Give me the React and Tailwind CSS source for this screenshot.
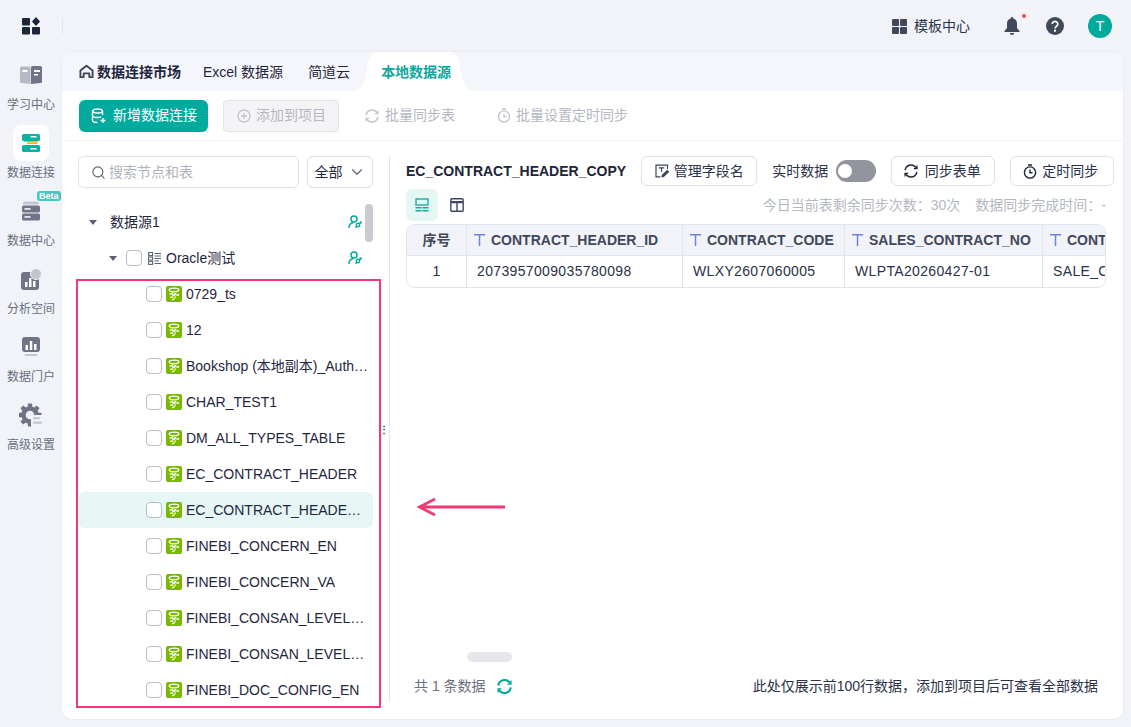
import React from "react";
import { Search, ChevronDown } from "lucide-react";

const FONT = { fontFamily: '"Liberation Sans", "Noto Sans CJK SC", sans-serif' };

const LogoIcon = () => (
  <svg width="18" height="18" viewBox="0 0 18 18" fill="#1d2539">
    <rect x="0" y="1" width="8" height="7.5" rx="1" />
    <rect x="0" y="10" width="8" height="7.5" rx="1" />
    <rect x="10" y="10" width="8" height="7.5" rx="1" />
    <path d="M14 0l4 4.500-4 4.500-4-4.500z" />
  </svg>
);

const BookIcon = () => (
  <svg width="24" height="20" viewBox="0 0 24 20">
    <path d="M2.500 1.500h7.500a1.500 1.500 0 0 1 1.500 1.500v16L2.500 18a1.500 1.500 0 0 1-1.500-1.500V3a1.500 1.500 0 0 1 1.500-1.500z" fill="#b5b9c6" />
    <path d="M21.500 1h-8A1.500 1.500 0 0 0 12 2.500V19l9.500-1a1.500 1.500 0 0 0 1.500-1.500v-14A1.500 1.500 0 0 0 21.500 1z" fill="#6f7586" />
    <rect x="3.500" y="5" width="5" height="2" fill="#fff" />
    <rect x="15" y="5" width="6" height="2" fill="#fff" />
    <rect x="15" y="9" width="4" height="1.500" fill="#fff" />
  </svg>
);

const ConnectIcon = () => (
  <svg width="20" height="20" viewBox="0 0 20 20">
    <path d="M3 7.500h13.500v3.500H6v-1.800h8.500V9H3z" fill="#f7b51d" />
    <rect x="1" y="1" width="18" height="7" rx="1.500" fill="#0eb0a3" />
    <rect x="1" y="12" width="18" height="7" rx="1.500" fill="#0eb0a3" />
    <rect x="9.500" y="3" width="6" height="1.500" fill="#fff" />
    <rect x="9.500" y="15" width="6" height="1.500" fill="#fff" />
  </svg>
);

const ServerIcon = () => (
  <svg width="20" height="20" viewBox="0 0 20 20">
    <rect x="2" y="0.500" width="16" height="3" rx="1.500" fill="#c3c6cf" />
    <rect x="1" y="4.500" width="18" height="7" rx="1.500" fill="#6f7586" />
    <rect x="1" y="12.500" width="18" height="7" rx="1.500" fill="#6f7586" />
    <rect x="3.500" y="7.200" width="6" height="1.500" fill="#fff" />
    <rect x="3.500" y="15.200" width="6" height="1.500" fill="#fff" />
  </svg>
);

const AnalysisIcon = () => (
  <svg width="24" height="24" viewBox="0 0 24 24">
    <rect x="2" y="5" width="18" height="18" rx="3" fill="#6f7586" />
    <circle cx="17" cy="7" r="5.500" fill="#c3c6cf" stroke="#f1f3f9" strokeWidth="1" />
    <rect x="6" y="15" width="2.500" height="5" fill="#fff" />
    <rect x="10" y="11" width="2.500" height="9" fill="#fff" />
    <rect x="14" y="14" width="2.500" height="6" fill="#fff" />
  </svg>
);

const PortalIcon = () => (
  <svg width="20" height="22" viewBox="0 0 20 22">
    <rect x="1" y="1" width="18" height="15" rx="3" fill="#6f7586" />
    <rect x="4.500" y="9" width="2.500" height="5" fill="#fff" />
    <rect x="8.800" y="5" width="2.500" height="9" fill="#fff" />
    <rect x="13" y="8" width="2.500" height="6" fill="#fff" />
    <rect x="3.500" y="18" width="13" height="2" rx="1" fill="#c3c6cf" />
  </svg>
);

const GearIcon = () => (
  <svg width="24" height="24" viewBox="0 0 24 24">
    <circle cx="11" cy="12" r="6.500" fill="none" stroke="#6f7586" strokeWidth="4.500" />
    {[0, 45, 90, 135, 180, 225, 270, 315].map((deg) => (
      <rect key={deg} x="8.800" y="0.500" width="4.400" height="4" rx="0.800" fill="#6f7586" transform={`rotate(${deg} 11 12)`} />
    ))}
    <rect x="12" y="12" width="12" height="12" fill="#f1f3f9" />
    <rect x="14" y="14" width="7" height="2.200" rx="1" fill="#c3c6cf" />
    <rect x="14" y="18.500" width="9" height="2.200" rx="1" fill="#c3c6cf" />
  </svg>
);

const HomeIcon = () => (
  <svg width="15" height="15" viewBox="0 0 16 16" fill="none" stroke="#3f4657" strokeWidth="2" strokeLinejoin="round">
    <path d="M1.500 7L8 1.800 14.500 7v7h-3.500v-4H5v4H1.500z" />
  </svg>
);

const DbPlusIcon = () => (
  <svg width="16" height="16" viewBox="0 0 16 16" fill="none" stroke="#fff" strokeWidth="1.400">
    <ellipse cx="6.500" cy="3" rx="5" ry="2" />
    <path d="M1.500 3v9.500c0 1.100 2.200 2 5 2M1.500 7.500c0 1.100 2.200 2 5 2 1.500 0 2.800-.2 3.700-.7M11.500 3v4" />
    <path d="M12 10v5M9.500 12.500h5" />
  </svg>
);

const CirclePlusIcon = () => (
  <svg width="14" height="14" viewBox="0 0 14 14" fill="none" stroke="#c4c6ce" strokeWidth="1.300">
    <circle cx="7" cy="7" r="6" />
    <path d="M7 4v6M4 7h6" />
  </svg>
);

const SyncIcon = ({ color = "#1d2539", size = 14, stroke = 1.400 }) => (
  <svg width={size} height={size} viewBox="0 0 14 14" fill="none" stroke={color} strokeWidth={stroke}>
    <path d="M1.200 6.200A5.900 5.900 0 0 1 11.500 3L12.800 4.500" />
    <path d="M12.800 7.800A5.900 5.900 0 0 1 2.500 11L1.200 9.500" />
    <path d="M13 1.500v3.200H9.800M1 12.500V9.300h3.200" strokeWidth="1.200" />
  </svg>
);

const TimerIcon = ({ color = "#1d2539" }) => (
  <svg width="14" height="15" viewBox="0 0 14 15" fill="none" stroke={color} strokeWidth="1.400">
    <circle cx="7" cy="8.500" r="5.600" />
    <path d="M5 1h4M7 5.500v3.200h2.500" />
  </svg>
);

const TreeNodeIcon = () => (
  <svg width="13" height="13" viewBox="0 0 13 13" fill="none" stroke="#5b6272" strokeWidth="1.100">
    <rect x="0.600" y="0.600" width="4" height="3" />
    <rect x="0.600" y="5" width="4" height="3" />
    <rect x="0.600" y="9.400" width="4" height="3" />
    <path d="M6.500 1.500H13M6.500 4H13M6.500 6.500H13M6.500 9H11M6.500 11.500H13" />
  </svg>
);

const UserKeyIcon = () => (
  <svg width="14" height="14" viewBox="0 0 14 14" fill="none" stroke="#0aa99c" strokeWidth="1.500">
    <circle cx="6" cy="4" r="3" />
    <path d="M1 13c0-3 1.800-5 4.300-5.200" />
    <circle cx="10" cy="10" r="1.700" />
    <path d="M11.500 8.500L13.500 6.500M12.500 7.500l1 1M8.800 11.300L7.500 12.800" />
  </svg>
);

const TableIcon = () => (
  <span className="flex h-4 w-4 shrink-0 items-center justify-center rounded-[2px] bg-[#7ab800]">
    <svg width="14" height="14" viewBox="0 0 14 14" fill="none" stroke="#fff" strokeWidth="1.300">
      <ellipse cx="7" cy="3" rx="4.800" ry="1.800" />
      <path d="M2.500 6.800h7M5 8h7M3 10.200h6M5 12.800l3-1.300" strokeDasharray="3.500 1" />
    </svg>
  </span>
);

const CardsIcon = () => (
  <svg width="14" height="14" viewBox="0 0 14 14" fill="none">
    <rect x="1" y="1" width="12" height="6" stroke="#0aa99c" strokeWidth="1.300" />
    <rect x="0.500" y="9" width="6" height="1.500" fill="#0aa99c" />
    <rect x="7.500" y="9" width="6" height="1.500" fill="#0aa99c" />
    <rect x="0.500" y="12" width="6" height="1.500" fill="#0aa99c" />
    <rect x="7.500" y="12" width="6" height="1.500" fill="#0aa99c" />
  </svg>
);

const LayoutIcon = () => (
  <svg width="14" height="14" viewBox="0 0 14 14" fill="none" stroke="#3f4664" strokeWidth="1.400">
    <rect x="0.800" y="0.800" width="12.400" height="12.400" rx="1" />
    <path d="M7 5v8" />
    <path d="M1 4.200h12" strokeWidth="2.200" />
  </svg>
);

const EditIcon = () => (
  <svg width="14" height="14" viewBox="0 0 14 14" fill="none" stroke="#3f4657" strokeWidth="1.200">
    <path d="M5.500 12.800H1V1.200h11.500V5" />
    <path d="M3.800 3.800h5.500M6.500 3.800v4" />
    <path d="M7.200 11.500l5-5 1.200 1.200-5 5H7.200z" fill="#3f4657" />
  </svg>
);

const GridIcon = () => (
  <svg width="15" height="15" viewBox="0 0 15 15" fill="#414859">
    <rect x="0" y="0" width="7" height="7" rx="1" />
    <rect x="8" y="0" width="7" height="7" rx="1" />
    <rect x="0" y="8" width="7" height="7" rx="1" />
    <rect x="8" y="8" width="7" height="7" rx="1" />
  </svg>
);

const BellIcon = () => (
  <svg width="16" height="18" viewBox="0 0 16 18" fill="#414859">
    <path d="M8 0a1.300 1.300 0 0 1 1.300 1.400C11.700 2 13 4 13 6.500V11l2.500 3v1H.5v-1L3 11V6.500C3 4 4.300 2 6.700 1.400A1.300 1.300 0 0 1 8 0z" />
    <path d="M5.800 16h4.400a2.200 2 0 0 1-4.400 0z" />
  </svg>
);

const HelpIcon = () => (
  <svg width="18" height="18" viewBox="0 0 18 18">
    <circle cx="9" cy="9" r="9" fill="#414859" />
    <path d="M6.200 7a2.800 2.600 0 1 1 4.400 2.200C9.500 10 9 10.400 9 11.500" fill="none" stroke="#fff" strokeWidth="1.700" />
    <rect x="8" y="12.700" width="2" height="2" fill="#fff" />
  </svg>
);

const TIcon = () => (
  <svg width="11" height="12" viewBox="0 0 11 12" fill="none" stroke="#6d82dc" strokeWidth="1.500" className="shrink-0">
    <path d="M0 .8h11M5.500 .8V12" />
  </svg>
);

const ArrowIcon = () => (
  <svg width="90" height="20" viewBox="0 0 90 20" fill="none" stroke="#ef3a74" strokeWidth="2.800">
    <path d="M3 10h86M19 2L3.500 10 19 18" />
  </svg>
);

const railItems = [
  { label: "学习中心", icon: <BookIcon /> },
  { label: "数据连接", icon: <ConnectIcon />, active: true },
  { label: "数据中心", icon: <ServerIcon />, beta: true },
  { label: "分析空间", icon: <AnalysisIcon /> },
  { label: "数据门户", icon: <PortalIcon /> },
  { label: "高级设置", icon: <GearIcon /> },
];

const tables = [
  "0729_ts",
  "12",
  "Bookshop (本地副本)_Authors",
  "CHAR_TEST1",
  "DM_ALL_TYPES_TABLE",
  "EC_CONTRACT_HEADER",
  "EC_CONTRACT_HEADER_COPY",
  "FINEBI_CONCERN_EN",
  "FINEBI_CONCERN_VA",
  "FINEBI_CONSAN_LEVEL_EN",
  "FINEBI_CONSAN_LEVEL_VA",
  "FINEBI_DOC_CONFIG_EN",
];

const columns = [
  { name: "CONTRACT_HEADER_ID", value: "2073957009035780098", width: "w-[216px]" },
  { name: "CONTRACT_CODE", value: "WLXY2607060005", width: "w-[162px]" },
  { name: "SALES_CONTRACT_NO", value: "WLPTA20260427-01", width: "w-[198px]" },
  { name: "CONTRACT_TYPE", value: "SALE_CONTRACT", width: "w-[160px]" },
];

const Rail = () => (
  <div className="flex w-[62px] shrink-0 flex-col items-center pt-[5px]">
    {railItems.map((item) => (
      <div key={item.label} className="relative flex h-[68px] w-full flex-col items-center">
        <div
          className={`flex h-9 w-9 items-center justify-center rounded-lg ${item.active ? "bg-white" : ""}`}
        >
          {item.icon}
        </div>
        <div className="mt-[2px] whitespace-nowrap text-[12px] leading-5 text-[#686e7e]">{item.label}</div>
        {item.beta && (
          <span className="absolute left-[37px] top-[-2px] rounded-[3px] bg-[#3fcbbd] px-[2px] text-[9px] font-bold leading-[10px] text-white">
            Beta
          </span>
        )}
      </div>
    ))}
  </div>
);

const TabBar = () => (
  <div className="flex h-[39px] shrink-0 items-center bg-[#f5f6fb] pl-[17px] text-[14px] text-[#1f2740]">
    <HomeIcon />
    <span className="ml-[3px] pt-px font-bold">数据连接市场</span>
    <span className="ml-[22px] pt-px">Excel 数据源</span>
    <span className="ml-[25px] pt-px">简道云</span>
    <div className="relative flex h-full w-[128px] items-center">
      <svg className="absolute inset-0" width="128" height="39" viewBox="0 0 128 39">
        <path
          d="M2 39C9 39 13 35 15 28L18 10C19 4 23 0 30 0H98C105 0 108 4 109 10L113 28C115 35 119 39 127 39Z"
          fill="#fff"
        />
      </svg>
      <span className="relative ml-[31px] pt-px font-bold text-[#0aa99c]">本地数据源</span>
    </div>
  </div>
);

const Toolbar = () => (
  <div className="flex h-[50px] shrink-0 items-center border-b border-[#f3f4f7] pl-[17px] text-[14px]">
    <button className="flex h-8 w-[129px] items-center justify-center gap-[6px] rounded-md bg-[#00ab9e] pl-px text-white">
      <DbPlusIcon />
      新增数据连接
    </button>
    <button className="ml-[15px] flex h-8 w-[116px] items-center justify-center gap-[5px] rounded border border-[#e0e2e8] bg-[#f4f4f6] pl-px text-[#b5b8c2]">
      <CirclePlusIcon />
      添加到项目
    </button>
    <span className="ml-[26px] flex items-center gap-[6px] text-[#b5b8c2]">
      <SyncIcon color="#c4c6ce" />
      批量同步表
    </span>
    <span className="ml-[42px] flex items-center gap-[5px] text-[#b5b8c2]">
      <TimerIcon color="#c4c6ce" />
      批量设置定时同步
    </span>
  </div>
);

const Checkbox = () => (
  <span className="block h-4 w-4 shrink-0 rounded-[4px] border border-[#b9bcc6] bg-white" />
);

const Caret = () => (
  <span className="h-0 w-0 shrink-0 border-x-[4px] border-t-[5px] border-x-transparent border-t-[#5b6272]" />
);

const TreePanel = () => (
  <div className="flex w-[327px] shrink-0 flex-col pl-4 pt-[15px]">
    <div className="flex h-8 shrink-0 items-center">
      <div className="flex h-8 w-[221px] items-center gap-[3px] rounded-md border border-[#dfe1e7] pl-[12px] text-[14px] text-[#b0b3bd]">
        <Search size={15} color="#5b6272" strokeWidth={1.800} />
        搜索节点和表
      </div>
      <div className="ml-2 flex h-8 w-[66px] items-center justify-center gap-[5px] rounded-md border border-[#dfe1e7] text-[14px] text-[#1f2740]">
        全部
        <ChevronDown size={18} color="#5b6272" strokeWidth={1.500} />
      </div>
    </div>
    <div className="relative mt-4 min-h-0 flex-1 overflow-hidden text-[14px] text-[#1f2740]">
      <div className="flex h-9 w-[295px] items-center pl-[11px] pr-[11px]">
        <Caret />
        <span className="ml-[13px]">数据源1</span>
        <span className="ml-auto">
          <UserKeyIcon />
        </span>
      </div>
      <div className="flex h-9 w-[295px] items-center pl-[31px] pr-[11px]">
        <Caret />
        <span className="ml-[9px] flex">
          <Checkbox />
        </span>
        <span className="ml-[6px] flex">
          <TreeNodeIcon />
        </span>
        <span className="ml-[5px]">Oracle测试</span>
        <span className="ml-auto">
          <UserKeyIcon />
        </span>
      </div>
      {tables.map((name) => (
        <div
          key={name}
          className={`flex h-9 w-[295px] items-center gap-1 rounded-md pl-[68px] pr-1 ${
            name === "EC_CONTRACT_HEADER_COPY" ? "bg-[#e6f6f5]" : ""
          }`}
        >
          <Checkbox />
          <TableIcon />
          <span className="truncate">{name}</span>
        </div>
      ))}
      <div className="absolute left-[287px] top-0 h-[38px] w-2 rounded bg-[#c9cbd0]" />
    </div>
  </div>
);

const DataTable = () => (
  <div className="w-[700px] shrink-0 overflow-hidden rounded-lg border border-[#e3e5eb] text-[14px]">
    <div className="flex h-[31px] w-[800px] border-b border-[#e3e5eb] bg-[#f1f3f8] font-bold text-[#414859]">
      <div className="flex w-[60px] shrink-0 items-center justify-center border-r border-[#e3e5eb]">序号</div>
      {columns.map((col) => (
        <div
          key={col.name}
          className={`flex shrink-0 items-center gap-[6px] overflow-hidden border-r border-[#e3e5eb] pl-[7px] ${col.width}`}
        >
          <TIcon />
          {col.name}
        </div>
      ))}
    </div>
    <div className="flex h-[31px] w-[800px] text-[#2a3148]">
      <div className="flex w-[60px] shrink-0 items-center justify-center border-r border-[#e3e5eb]">1</div>
      {columns.map((col) => (
        <div
          key={col.name}
          className={`flex shrink-0 items-center overflow-hidden border-r border-[#e3e5eb] pl-[10px] tracking-[0.35px] ${col.width}`}
        >
          {col.value}
        </div>
      ))}
    </div>
  </div>
);

const OutlineButton = ({ icon, label, className }) => (
  <button
    className={`flex h-[30px] items-center justify-center rounded-md border border-[#dfe1e7] text-[14px] text-[#2a3148] ${className}`}
  >
    {icon}
    {label}
  </button>
);

const DetailPanel = () => (
  <div className="flex min-w-0 flex-1 flex-col pl-4 pt-[15px]">
    <div className="flex h-[30px] shrink-0 items-center">
      <span className="text-[14px] font-bold text-[#1d2539]">EC_CONTRACT_HEADER_COPY</span>
      <OutlineButton icon={<EditIcon />} label="管理字段名" className="ml-[15px] w-[116px] gap-[5px]" />
      <span className="ml-[15px] text-[14px] text-[#2a3148]">实时数据</span>
      <span className="ml-2 flex h-[22px] w-10 items-center rounded-full bg-[#92959d] pl-[2px]">
        <span className="h-[14px] w-[14px] rounded-full bg-white" />
      </span>
      <OutlineButton icon={<SyncIcon />} label="同步表单" className="ml-[15px] w-[104px] gap-[7px] pr-[2px]" />
      <OutlineButton icon={<TimerIcon />} label="定时同步" className="ml-[15px] w-[104px] gap-[5px] pr-[3px]" />
    </div>
    <div className="mt-[3px] flex h-8 w-[700px] shrink-0 items-center">
      <span className="flex h-8 w-8 items-center justify-center rounded-md bg-[#e6f6f5]">
        <CardsIcon />
      </span>
      <span className="ml-3 flex">
        <LayoutIcon />
      </span>
      <span className="ml-auto text-[14px] text-[#b5b8c2]">今日当前表剩余同步次数：30次</span>
      <span className="ml-[15px] text-[14px] text-[#b5b8c2]">数据同步完成时间：-</span>
    </div>
    <div className="mt-[3px]">
      <DataTable />
    </div>
    <div className="relative min-h-0 flex-1">
      <div className="absolute bottom-0 left-[61px] h-[10px] w-[45px] rounded-full bg-[#e5e7eb]" />
    </div>
    <div className="flex h-[57px] w-[692px] shrink-0 items-center pb-[9px] pl-2 text-[14px]">
      <span className="text-[#6b7080]">共 1 条数据</span>
      <span className="ml-[11px] flex">
        <SyncIcon color="#0aa99c" size={15} stroke={2} />
      </span>
      <span className="ml-auto text-[#2a3148]">此处仅展示前100行数据，添加到项目后可查看全部数据</span>
    </div>
  </div>
);

export default function App() {
  return (
    <div className="relative flex h-[727px] w-[1131px] flex-col overflow-hidden bg-[#f1f3f9]" style={FONT}>
      <div className="flex h-[52px] shrink-0 items-center">
        <div className="ml-[22px] flex">
          <LogoIcon />
        </div>
        <div className="ml-[22px] h-4 w-px bg-[#e3e5eb]" />
        <div className="ml-auto flex items-center pr-[19px]">
          <GridIcon />
          <span className="ml-[7px] text-[14px] text-[#2a3148]">模板中心</span>
          <span className="relative ml-[34px] flex">
            <BellIcon />
            <span className="absolute right-[-6px] top-[-3px] h-1 w-1 rounded-full bg-[#f2494c]" />
          </span>
          <span className="ml-[26px] flex">
            <HelpIcon />
          </span>
          <span className="ml-6 flex h-6 w-6 items-center justify-center rounded-full bg-[#00ab9e] text-[14px] text-white">
            T
          </span>
        </div>
      </div>
      <div className="flex min-h-0 flex-1">
        <Rail />
        <div className="mb-2 mr-2 flex min-w-0 flex-1 flex-col overflow-hidden rounded-[10px] bg-white shadow-[0_0_2px_rgba(30,40,70,0.08)]">
          <TabBar />
          <Toolbar />
          <div className="flex min-h-0 flex-1">
            <TreePanel />
            <div className="relative mb-[17px] mt-[15px] w-px shrink-0 bg-[#e3e5eb]">
              <span className="absolute left-[-10px] top-[267px] bg-white text-center text-[10px] font-bold leading-[14px] text-[#414859]">
                ⋮
              </span>
            </div>
            <DetailPanel />
          </div>
        </div>
      </div>

      {/* annotation over the screenshot */}
      <div className="pointer-events-none absolute left-[76px] top-[279px] h-[429px] w-[305px] border-2 border-[#ef3a74]" />
      <div className="pointer-events-none absolute left-[416px] top-[497px] flex">
        <ArrowIcon />
      </div>
    </div>
  );
}
